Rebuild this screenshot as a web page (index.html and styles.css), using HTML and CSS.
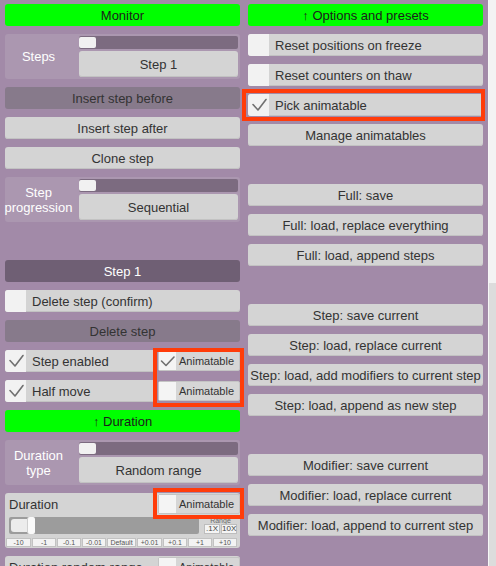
FILE: index.html
```html
<!DOCTYPE html>
<html>
<head>
<meta charset="utf-8">
<link rel="stylesheet" href="styles.css">
</head>
<body>
<div class="page">
  <div class="col">
    <div class="btn green">Monitor</div>
    <div class="panel">
      <div class="panel-label">Steps</div>
      <div class="panel-ctl">
        <div class="track"><div class="knob"></div></div>
        <div class="btn">Step 1</div>
      </div>
    </div>
    <div class="btn dark">Insert step before</div>
    <div class="btn">Insert step after</div>
    <div class="btn">Clone step</div>
    <div class="panel">
      <div class="panel-label">Step<br>progression</div>
      <div class="panel-ctl">
        <div class="track"><div class="knob"></div></div>
        <div class="btn">Sequential</div>
      </div>
    </div>
    <div class="spacer"></div>
    <div class="btn head">Step 1</div>
    <div class="check-row"><div class="box"></div><div class="text">Delete step (confirm)</div></div>
    <div class="btn dark">Delete step</div>
    <div class="split">
      <div class="check-row"><div class="box"><svg class="tick" viewBox="0 0 21 22"><path d="M5 10.5l5 5.5L18 5.5"/></svg></div><div class="text">Step enabled</div></div>
      <div class="anim"><div class="sbox"><svg class="tick" viewBox="0 0 17 18"><path d="M2.5 9l4.5 4.5L15 5"/></svg></div><div class="text">Animatable</div></div>
    </div>
    <div class="split">
      <div class="check-row"><div class="box"><svg class="tick" viewBox="0 0 21 22"><path d="M5 10.5l5 5.5L18 5.5"/></svg></div><div class="text">Half move</div></div>
      <div class="anim"><div class="sbox"></div><div class="text">Animatable</div></div>
    </div>
    <div class="btn green">↑ Duration</div>
    <div class="panel">
      <div class="panel-label">Duration<br>type</div>
      <div class="panel-ctl">
        <div class="track"><div class="knob"></div></div>
        <div class="btn">Random range</div>
      </div>
    </div>
    <div class="dpanel">
      <div class="dtop">
        <div class="dlabel">Duration</div>
        <div class="anim"><div class="sbox"></div><div class="text">Animatable</div></div>
      </div>
      <div class="dslider">
        <div class="dtrack"><div class="dfill"></div><div class="dknob"></div></div>
        <div class="drange">
          <div class="rl">Range</div>
          <div class="rbtns"><div class="rbtn">.1X</div><div class="rbtn">10X</div></div>
        </div>
      </div>
      <div class="dsteps">
        <div class="sb w25">-10</div>
        <div class="sb">-1</div>
        <div class="sb">-0.1</div>
        <div class="sb">-0.01</div>
        <div class="sb w29">Default</div>
        <div class="sb w25">+0.01</div>
        <div class="sb">+0.1</div>
        <div class="sb">+1</div>
        <div class="sb">+10</div>
      </div>
    </div>
    <div class="dpanel">
      <div class="dtop">
        <div class="dlabel">Duration random range</div>
        <div class="anim"><div class="sbox"></div><div class="text">Animatable</div></div>
      </div>
    </div>
  </div>

  <div class="col">
    <div class="btn green">↑ Options and presets</div>
    <div class="check-row"><div class="box"></div><div class="text">Reset positions on freeze</div></div>
    <div class="check-row"><div class="box"></div><div class="text">Reset counters on thaw</div></div>
    <div class="check-row"><div class="box"><svg class="tick" viewBox="0 0 21 22"><path d="M5 10.5l5 5.5L18 5.5"/></svg></div><div class="text">Pick animatable</div></div>
    <div class="btn">Manage animatables</div>
    <div class="spacer"></div>
    <div class="btn">Full: save</div>
    <div class="btn">Full: load, replace everything</div>
    <div class="btn">Full: load, append steps</div>
    <div class="spacer"></div>
    <div class="btn">Step: save current</div>
    <div class="btn">Step: load, replace current</div>
    <div class="btn">Step: load, add modifiers to current step</div>
    <div class="btn">Step: load, append as new step</div>
    <div class="spacer"></div>
    <div class="btn">Modifier: save current</div>
    <div class="btn">Modifier: load, replace current</div>
    <div class="btn">Modifier: load, append to current step</div>
  </div>

  <div class="scrollbar"><div class="thumb"></div><div class="rest"></div></div>

  <div class="hl hl-pick"></div>
  <div class="hl hl-anim"></div>
  <div class="hl hl-dur"></div>
</div>
</body>
</html>
```
FILE: styles.css
```css
* { box-sizing: border-box; }
html, body { margin: 0; padding: 0; }
body {
  width: 496px;
  height: 566px;
  overflow: hidden;
  background: #a28aa8;
  font-family: "Liberation Sans", Arial, sans-serif;
  font-size: 13px;
  color: #333;
}
.page {
  position: relative;
  display: flex;
  height: 566px;
  padding: 4px 0 0 5px;
}
.col {
  width: 235px;
  flex: none;
  display: flex;
  flex-direction: column;
  gap: 8px;
}
.col + .col { margin-left: 8px; }

.btn {
  flex: none;
  height: 22px;
  line-height: 23px;
  text-align: center;
  white-space: nowrap;
  background: #d4d4d4;
  border-radius: 3px;
  box-shadow: inset 0 -1px 0 #c2c2c2;
}
.green { background: #00ff00; color: #1c1c1c; box-shadow: none; }
.dark { background: #877a8b; box-shadow: none; }
.head { background: #6f5f74; color: #fff; box-shadow: none; }
.spacer { flex: none; height: 22px; }

.panel {
  flex: none;
  height: 45px;
  display: flex;
  background: #ab97b0;
  border-radius: 3px;
  padding: 2px 2px 2px 0;
}
.panel-label {
  width: 74px;
  flex: none;
  padding-right: 7px;
  color: #fff;
  display: flex;
  align-items: center;
  justify-content: center;
  text-align: center;
  line-height: 15px;
  white-space: nowrap;
}
.panel-ctl {
  flex: 1;
  display: flex;
  flex-direction: column;
  gap: 2px;
}
.track {
  height: 13px;
  background: #7c6b80;
  border-radius: 2px;
  padding: 1px 0;
}
.knob {
  width: 17px;
  height: 11px;
  background: #f1f1f1;
  border-radius: 2px;
}
.panel-ctl .btn { height: 26px; line-height: 27px; }

.check-row {
  flex: none;
  display: flex;
  align-items: center;
  height: 22px;
  background: #d4d4d4;
  border-radius: 3px;
  box-shadow: inset 0 -1px 0 #c2c2c2;
  white-space: nowrap;
}
.box {
  width: 21px;
  height: 22px;
  flex: none;
  background: #f2f2f2;
  border-radius: 3px 0 0 3px;
}
.check-row .text { padding-left: 6px; padding-top: 1px; }
.tick {
  display: block;
  width: 100%;
  height: 100%;
}
.tick path {
  fill: none;
  stroke: #707070;
  stroke-width: 1.6;
  stroke-linecap: round;
  stroke-linejoin: round;
}

.split {
  flex: none;
  display: flex;
  gap: 1px;
  height: 22px;
}
.split .check-row { width: 152px; }
.anim {
  flex: none;
  width: 82px;
  height: 20px;
  margin-top: 1px;
  display: flex;
  align-items: center;
  background: #d6d6d6;
  border: 1px solid #c4c4c4;
  border-radius: 2px;
  font-size: 11px;
  white-space: nowrap;
}
.anim .sbox {
  width: 17px;
  height: 18px;
  flex: none;
  background: #f4f4f4;
}
.anim .text { padding-left: 3px; }

.dpanel {
  flex: none;
  height: 55px;
  display: flex;
  flex-direction: column;
  background: #d4d4d4;
  border-radius: 3px;
}
.dtop {
  display: flex;
  justify-content: space-between;
  height: 22px;
}
.dlabel {
  padding-left: 4px;
  line-height: 23px;
  white-space: nowrap;
}
.dslider {
  display: flex;
  height: 17px;
  margin: 2px 3px 0 4px;
}
.dtrack {
  width: 190px;
  flex: none;
  display: flex;
  align-items: center;
  background: #9c9c9c;
  border-radius: 2px;
  padding-left: 2px;
}
.dfill {
  width: 17px;
  height: 13px;
  background: #ececec;
  border-radius: 3px 0 0 3px;
}
.dknob {
  width: 7px;
  height: 17px;
  background: #fafafa;
  border-radius: 2px;
  box-shadow: -1px 0 0 #cfcfcf;
}
.drange {
  margin-left: 5px;
  width: 33px;
  display: flex;
  flex-direction: column;
  align-items: center;
}
.rl {
  margin-top: 1px;
  height: 6px;
  font-size: 7px;
  line-height: 6px;
  color: #6a6a6a;
  overflow: hidden;
}
.rbtns { display: flex; gap: 1px; }
.rbtn {
  width: 16px;
  height: 10px;
  font-size: 8px;
  line-height: 8px;
  text-align: center;
  color: #444;
  background: #f4f4f4;
  border: 1px solid #bdbdbd;
}
.dsteps {
  display: flex;
  gap: 1px;
  height: 9px;
  margin: 4px 0 0 1px;
}
.sb {
  width: 24px;
  height: 9px;
  font-size: 7px;
  line-height: 8px;
  text-align: center;
  color: #555;
  background: #f3f3f3;
  border: 1px solid #c2c2c2;
  white-space: nowrap;
  overflow: hidden;
}
.sb.w25 { width: 25px; }
.sb.w29 { width: 29px; }

.scrollbar {
  margin-left: auto;
  margin-top: -4px;
  width: 8px;
  height: 566px;
  display: flex;
  flex-direction: column;
  border-left: 1px solid #f7f7f7;
}
.thumb { height: 283px; background: #f3f3f3; }
.rest { flex: 1; background: #dcdcdc; }

.hl {
  position: absolute;
  border: 4px solid #ff3c0a;
}
.hl-pick { left: 242px; top: 89px; width: 243px; height: 32px; }
.hl-anim { left: 153px; top: 348px; width: 91px; height: 59px; }
.hl-dur { left: 153px; top: 488px; width: 91px; height: 31px; }
```
